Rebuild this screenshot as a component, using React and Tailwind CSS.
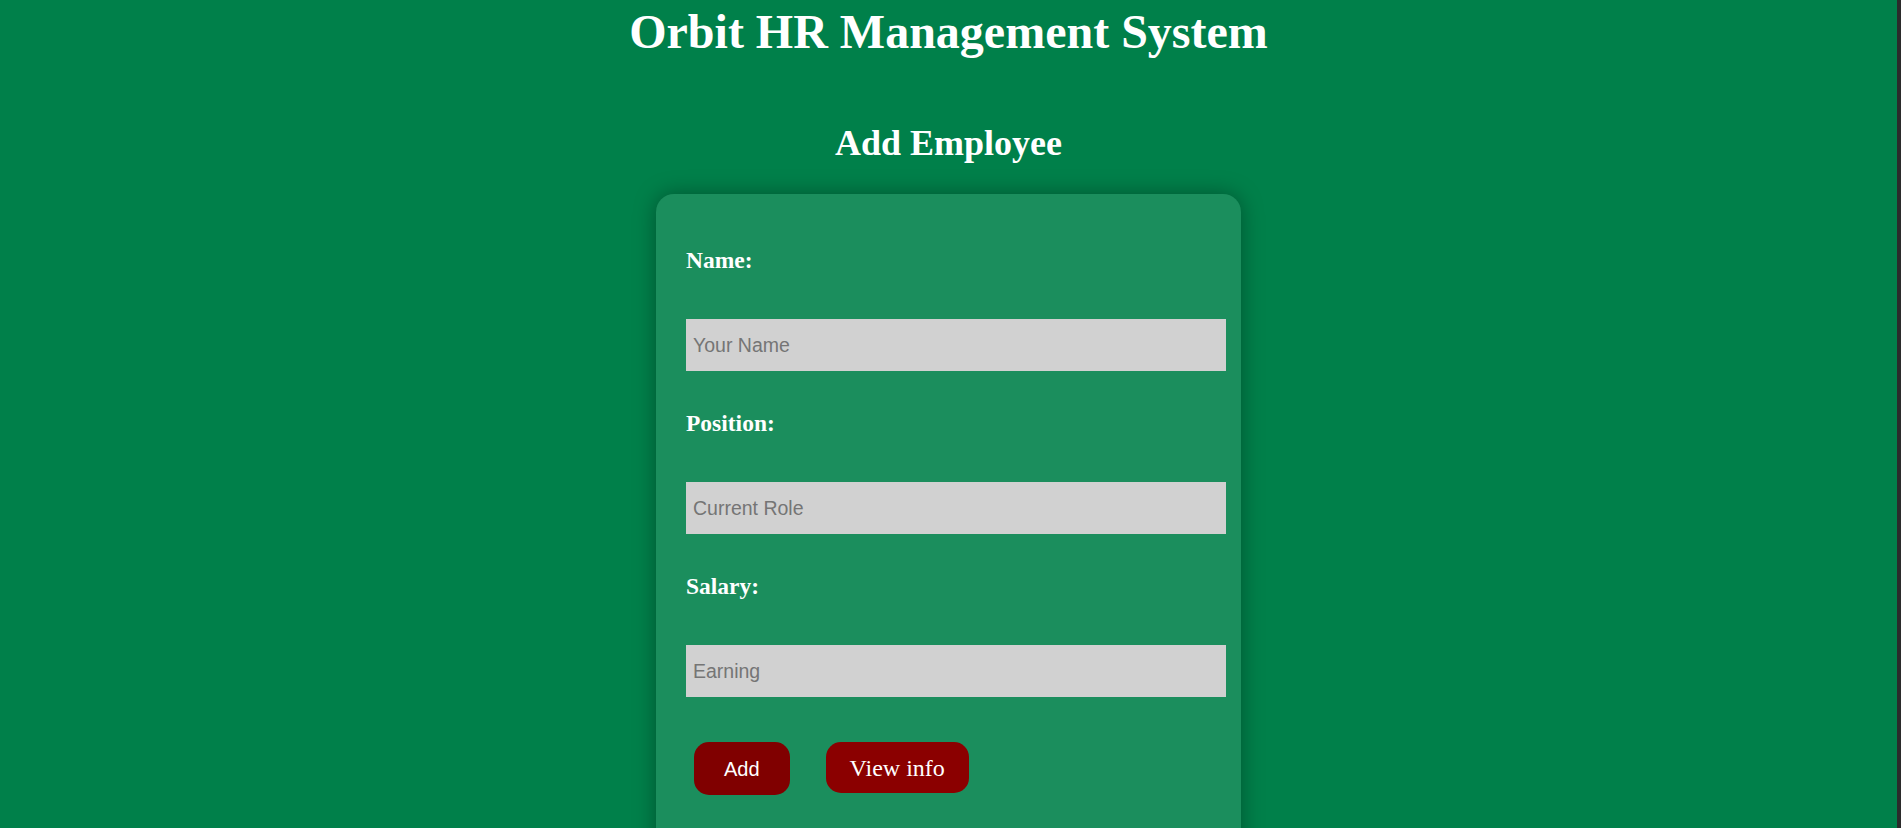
import React from "react";

const fields = [
  { label: "Name:", placeholder: "Your Name" },
  { label: "Position:", placeholder: "Current Role" },
  { label: "Salary:", placeholder: "Earning" },
];

export default function App() {
  return (
    <div className="flex h-[828px] w-full overflow-hidden">
      <main className="flex flex-1 flex-col items-center bg-[#00804a] font-['Liberation_Serif',serif] text-white">
        <h1 className="mt-[4px] text-[48px] font-bold leading-[56px]">Orbit HR Management System</h1>
        <h2 className="mt-[62px] text-[36px] font-bold leading-[42px]">Add Employee</h2>

        <form className="mt-[30px] flex w-[585px] shrink-0 flex-col rounded-[18px] bg-[#1b8e5d] pb-[80px] pl-[30px] pt-[53px] shadow-[0_0_22px_rgba(0,0,0,0.35)]">
          {fields.map((f, i) => (
            <div key={f.label} className={i > 0 ? "mt-[39px] flex flex-col" : "flex flex-col"}>
              <label className="text-[23.5px] font-bold leading-[26px]">{f.label}</label>
              <input
                type="text"
                placeholder={f.placeholder}
                className="mt-[46px] h-[52px] w-[540px] bg-[#d1d1d1] pl-[7px] font-['Liberation_Sans',Arial,sans-serif] text-[19.5px] text-black outline-none placeholder:text-[#757575]"
              />
            </div>
          ))}

          <div className="mt-[45px] flex items-start gap-[36px] pl-[8px]">
            <button
              type="button"
              className="h-[53px] rounded-[15px] bg-[#800000] px-[30px] font-['Liberation_Sans',Arial,sans-serif] text-[20px] text-white"
            >
              Add
            </button>
            <button
              type="button"
              className="h-[51px] rounded-[15px] bg-[#8b0000] px-[24px] text-[24px] text-white"
            >
              View info
            </button>
          </div>
        </form>
      </main>
      <div className="w-[4px] shrink-0 bg-[#2b2b2b]" />
    </div>
  );
}
